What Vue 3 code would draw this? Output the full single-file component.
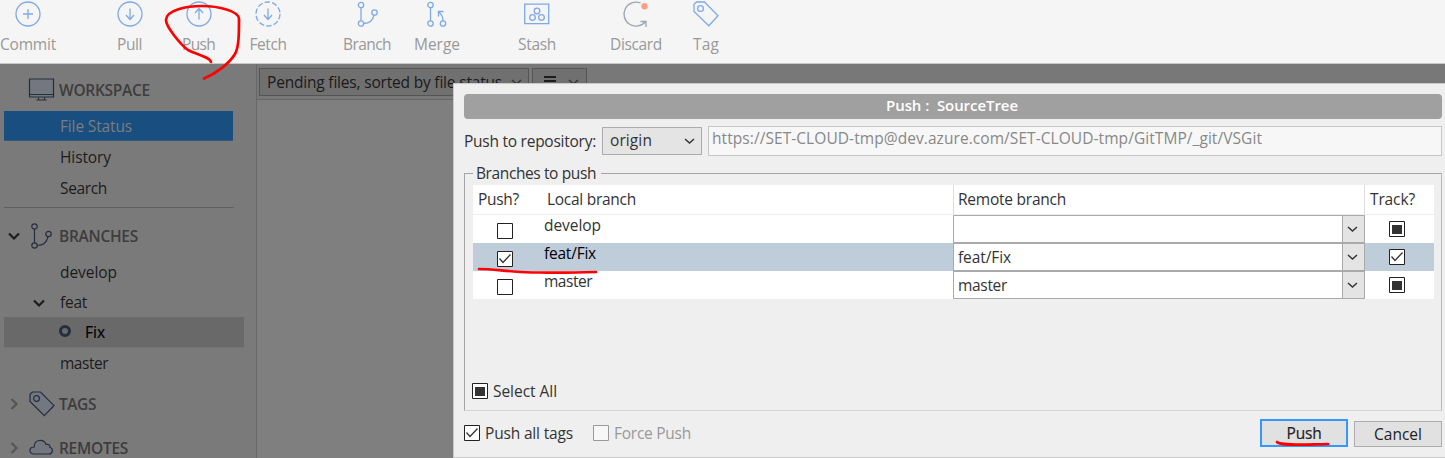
<script setup>
const tools = [
  { name: 'Commit', icon: 'commit', width: 56 },
  { name: 'Pull', icon: 'pull', width: 25 },
  { name: 'Push', icon: 'push', width: 33 },
  { name: 'Fetch', icon: 'fetch', width: 37 },
  { name: 'Branch', icon: 'branch', width: 48 },
  { name: 'Merge', icon: 'merge', width: 46 },
  { name: 'Stash', icon: 'stash', width: 38 },
  { name: 'Discard', icon: 'discard', width: 52 },
  { name: 'Tag', icon: 'tag', width: 26 },
]

const branches = [
  { name: 'develop', push: false, remote: '', track: 'mixed', width: 57 },
  { name: 'feat/Fix', push: true, remote: 'feat/Fix', track: 'on', width: 52, selected: true },
  { name: 'master', push: false, remote: 'master', track: 'mixed', width: 48 },
]

// Tracks a label so that it fills the given width in pixels.
const vFit = (el, { value }) => {
  el.style.letterSpacing = '0px'
  const natural = el.getBoundingClientRect().width
  el.style.letterSpacing = `${(value - natural) / el.textContent.length}px`
}
</script>

<template>
  <div class="app">
    <header class="toolbar">
      <div v-for="t in tools" :key="t.name" class="tool">
        <svg class="tool-icon" width="26" height="26" viewBox="0 0 26 26">
          <template v-if="t.icon === 'commit'">
            <circle cx="13" cy="13" r="12" /><path d="M8 13h10M13 8v10" />
          </template>
          <template v-else-if="t.icon === 'pull'">
            <circle cx="13" cy="13" r="12" /><path d="M13 7.500v11M9 14l4 4.500 4-4.500" />
          </template>
          <template v-else-if="t.icon === 'push'">
            <circle cx="13" cy="13" r="12" /><path d="M13 18.500v-11M9 12l4-4.500 4 4.500" />
          </template>
          <template v-else-if="t.icon === 'fetch'">
            <circle cx="13" cy="13" r="12" stroke-dasharray="5.400 2.140" /><path d="M13 7.500v11M9 14l4 4.500 4-4.500" />
          </template>
          <template v-else-if="t.icon === 'branch'">
            <circle cx="7" cy="4" r="2.700" /><circle cx="7" cy="22.500" r="2.700" /><circle cx="20.500" cy="11.500" r="2.700" />
            <path d="M7 6.700v13M9.700 22.500c6 0 9.300-3.500 10.300-8.300" />
          </template>
          <template v-else-if="t.icon === 'merge'">
            <circle cx="6.500" cy="4" r="2.700" /><circle cx="6.500" cy="22.500" r="2.700" /><circle cx="19" cy="22.500" r="2.700" />
            <path d="M6.500 6.700v13M19 19.800C19 15.500 17.500 13 14.500 11M14.500 15.500V10.500h5" />
          </template>
          <template v-else-if="t.icon === 'stash'">
            <path d="M.7 3.200h24v19.500H.7z" />
            <circle cx="13" cy="10" r="2.800" /><circle cx="8.500" cy="16.500" r="2.800" /><circle cx="17.500" cy="16.500" r="2.800" />
          </template>
          <template v-else-if="t.icon === 'discard'">
            <path class="slate" d="M17.500 2A12 12 0 1 0 22.500 20.500M17.500 20.500h5.500v5.500" />
            <circle class="dot" cx="21.500" cy="5.200" r="3.200" />
          </template>
          <template v-else>
            <path d="M1 3.200 3.500 1h8L25 14.700 15.800 24.700 1 10.500z" /><circle cx="7.500" cy="7.500" r="2.900" />
          </template>
        </svg>
        <span v-fit="t.width" class="text">{{ t.name }}</span>
      </div>
    </header>

    <div class="workarea">
      <aside class="sidebar">
        <div class="group workspace">
          <span class="arrow"></span>
          <svg class="group-icon" width="26" height="26" viewBox="0 0 26 26">
            <path class="shade" d="M.5 2h24v18H.500z" /><path d="M.500 17.500h24M9.500 20.500v2M15.500 20.500v2M7.500 23h10" />
          </svg>
          <span v-fit="91" class="text">WORKSPACE</span>
        </div>
        <div class="item current"><span v-fit="72" class="text">File Status</span></div>
        <div class="item"><span v-fit="51" class="text">History</span></div>
        <div class="item"><span v-fit="47" class="text">Search</span></div>
        <div class="divider"></div>
        <div class="group branches">
          <svg class="arrow open" width="12" height="8" viewBox="0 0 12 8"><path d="m1 1.500 5 5 5-5" /></svg>
          <svg class="group-icon" width="26" height="26" viewBox="0 0 26 26">
            <circle cx="5.500" cy="3.500" r="2.700" /><circle cx="5.500" cy="22.500" r="2.700" /><circle cx="19.500" cy="11" r="2.700" />
            <path d="M5.500 6.200v13.600M8.200 22.500c6 0 9.800-3.500 10.800-8.800" />
          </svg>
          <span v-fit="79" class="text">BRANCHES</span>
        </div>
        <div class="item"><span v-fit="57" class="text">develop</span></div>
        <div class="item folder">
          <svg class="arrow open" width="12" height="8" viewBox="0 0 12 8"><path d="m1 1.500 5 5 5-5" /></svg>
          <span v-fit="27" class="text">feat</span>
        </div>
        <div class="item checked"><i class="ring"></i><span v-fit="20" class="text">Fix</span></div>
        <div class="item"><span v-fit="48" class="text">master</span></div>
        <div class="group tags">
          <svg class="arrow" width="8" height="12" viewBox="0 0 8 12"><path d="m1.500 1 5 5-5 5" /></svg>
          <svg class="group-icon" width="26" height="26" viewBox="0 0 26 26">
            <path class="shade" d="M1 3.200 3.500 1h8L25 14.700 15.300 24.700 1 10.500z" /><circle cx="7.500" cy="7.500" r="2.900" />
          </svg>
          <span v-fit="37" class="text">TAGS</span>
        </div>
        <div class="group">
          <svg class="arrow" width="8" height="12" viewBox="0 0 8 12"><path d="m1.500 1 5 5-5 5" /></svg>
          <svg class="group-icon" width="26" height="26" viewBox="0 0 26 26">
            <path class="shade" d="M5 19c-5.500 0-5.500-7 .2-7C5 4 15 3.500 17 9.500c3-.8 4.500 1 4 3 3.500.3 3 6.500-1 6.500z" />
          </svg>
          <span v-fit="69" class="text">REMOTES</span>
        </div>
      </aside>
      <main class="main">
        <div class="filters">
          <div class="dropdown sort">
            <span v-fit="235" class="text">Pending files, sorted by file status</span>
            <svg class="chevron" width="11" height="7" viewBox="0 0 11 7"><path d="m1 1 4.500 4L10 1" /></svg>
          </div>
          <div class="dropdown view">
            <svg width="12" height="12" viewBox="0 0 12 12"><path class="bars" d="M0 1h12M0 5h12M0 9h12" /></svg>
            <svg class="chevron" width="11" height="7" viewBox="0 0 11 7"><path d="m1 1 4.500 4L10 1" /></svg>
          </div>
        </div>
      </main>
    </div>

    <section class="dialog">
      <h1 class="title"><span v-fit="132" class="text">Push :&nbsp; SourceTree</span></h1>
      <div class="repository">
        <span v-fit="132" class="text">Push to repository:</span>
        <div class="origin">
          <span v-fit="42" class="text">origin</span>
          <svg class="chevron" width="11" height="7" viewBox="0 0 11 7"><path d="m1 1 4.500 4L10 1" /></svg>
        </div>
        <div class="url"><span v-fit="550" class="text">https://SET-CLOUD-tmp@dev.azure.com/SET-CLOUD-tmp/GitTMP/_git/VSGit</span></div>
      </div>

      <div class="frame">
        <div class="legend"><span v-fit="120" class="text">Branches to push</span></div>
        <div class="table">
          <div class="row head">
            <div class="c-push"><span v-fit="41" class="text">Push?</span></div>
            <div class="c-local"><span v-fit="89" class="text">Local branch</span></div>
            <div class="c-remote"><span v-fit="108" class="text">Remote branch</span></div>
            <div class="c-track"><span v-fit="45" class="text">Track?</span></div>
          </div>
          <div v-for="b in branches" :key="b.name" class="row" :class="{ selected: b.selected }">
            <div class="c-push">
              <svg class="box" width="16" height="16" viewBox="0 0 16 16">
                <path class="edge" d="M.5.5h15v15H.5z" /><path v-if="b.push" class="tick" d="m2.500 7.500 3.500 4 7.500-8" />
              </svg>
            </div>
            <div class="c-local"><span v-fit="b.width" class="text">{{ b.name }}</span></div>
            <div class="c-remote">
              <div class="combo"><span v-if="b.remote" v-fit="b.width + 1" class="text">{{ b.remote }}</span></div>
              <div class="combo-arrow">
                <svg class="chevron" width="11" height="7" viewBox="0 0 11 7"><path d="m1 1 4.500 4L10 1" /></svg>
              </div>
            </div>
            <div class="c-track">
              <svg class="box" width="16" height="16" viewBox="0 0 16 16">
                <path class="edge" d="M.5.5h15v15H.5z" />
                <path v-if="b.track === 'on'" class="tick" d="m2.500 7.500 3.500 4 7.500-8" />
                <path v-else class="fill" d="M3 4h10v9H3z" />
              </svg>
            </div>
          </div>
        </div>
        <label class="check select-all">
          <svg class="box" width="16" height="16" viewBox="0 0 16 16"><path class="edge" d="M.5.5h15v15H.5z" /><path class="fill" d="M3 4h10v9H3z" /></svg>
          <span v-fit="64" class="text">Select All</span>
        </label>
      </div>

      <footer class="footer">
        <label class="check">
          <svg class="box" width="16" height="16" viewBox="0 0 16 16"><path class="edge" d="M.5.5h15v15H.5z" /><path class="tick" d="m2.500 7.500 3.500 4 7.500-8" /></svg>
          <span v-fit="88" class="text">Push all tags</span>
        </label>
        <label class="check force">
          <svg class="box" width="16" height="16" viewBox="0 0 16 16"><path class="edge" d="M.5.5h15v15H.5z" /></svg>
          <span v-fit="77" class="text">Force Push</span>
        </label>
        <button class="btn primary"><span v-fit="35" class="text">Push</span></button>
        <button class="btn"><span v-fit="48" class="text">Cancel</span></button>
      </footer>
    </section>

    <svg class="marks" width="1445" height="458" viewBox="0 0 1445 458">
      <path d="M211 62C210 57 195 54 188 50C181 45 166 27 166 20C166 10 187 6 202 6C218 6 239 11 239 19C239 33 239 47 235 54C229 64 215 74 204 78.500" />
      <path d="M479 269C495 269 512 272.500 540 272.500C560 273 580 272.500 596 272" />
      <path d="M1277 442C1281 446 1302 444.500 1328 444" />
    </svg>
  </div>
</template>

<style>
body { overflow: hidden; }
</style>

<style scoped>
.app {
  position: relative;
  box-sizing: border-box;
  width: 1445px;
  height: 458px;
  overflow: hidden;
  background: #7f7f7f;
  color: #333;
  font: 15.5px/20px "Open Sans", "Noto Sans", sans-serif;
}
.app *, .app *::before { box-sizing: border-box; }
.text { display: inline-block; white-space: pre; flex: none; }
svg { display: block; flex: none; overflow: visible; fill: none; }

.toolbar {
  display: flex;
  height: 64px;
  padding-top: 1px;
  background: #f5f5f5;
  border-bottom: 1px solid #c8c8c8;
  color: #999;
}
.tool { display: flex; flex-direction: column; align-items: center; gap: 7px; }
.tool:nth-child(1) { width: 56px; }
.tool:nth-child(2) { width: 26px; margin-left: 60.500px; }
.tool:nth-child(3) { width: 32px; margin-left: 40px; }
.tool:nth-child(4) { width: 37px; margin-left: 35px; }
.tool:nth-child(5) { width: 48px; margin-left: 56.500px; }
.tool:nth-child(6) { width: 46px; margin-left: 23px; }
.tool:nth-child(7) { width: 38px; margin-left: 58px; }
.tool:nth-child(8) { width: 52px; margin-left: 54px; }
.tool:nth-child(9) { width: 26px; margin-left: 31px; }
.tool-icon { stroke: #7faae6; stroke-width: 1.3; }
.tool-icon .slate { stroke: #9ba5b5; }
.tool-icon .dot { fill: #ff9f89; stroke: none; }

.workarea { display: flex; height: 394px; }
.sidebar {
  width: 257px;
  padding: 5px 0 0 4px;
  background: #7a7a7a;
  border-right: 1px solid #686868;
  color: #1c1c1c;
}
.group { display: flex; align-items: center; height: 44px; color: #3d3d3d; font-weight: 600; font-size: 15.5px; }
.group.workspace { height: 42px; }
.group.branches { height: 42px; margin-top: 7px; }
.group.tags { margin-top: 3px; }
.group .arrow { width: 12px; margin-left: 4px; }
.group-icon { margin: 0 4px 0 9px; stroke: #252e3f; stroke-width: 1.2; }
.group-icon .shade { fill: #737880; }
.arrow { stroke: #565656; stroke-width: 2.2; }
.arrow.open { stroke: #1c1c1c; }
.item { display: flex; align-items: center; height: 31px; padding-left: 56px; }
.item .text { margin-top: -2px; }
.item.current .text { margin-top: 0; }
.item.current { width: 229px; height: 30px; margin-bottom: 1px; background: #194e80; border-bottom: 1px solid #345a7d; color: #7d7d7d; }
.divider { width: 230px; height: 1px; margin-top: 3px; background: #606060; }
.item.folder { height: 29px; padding-left: 29px; gap: 15px; }
.item.checked { width: 240px; padding-left: 55px; gap: 14px; background: #696969; border-bottom: 1px solid #747474; color: #000; -webkit-text-stroke: .2px #000; }
.item.checked .text { margin-top: 0; }
.ring { width: 12px; height: 12px; margin-top: -2px; border: 3px solid #252e3f; border-radius: 50%; }

.main { flex: 1; }
.filters { display: flex; gap: 3px; height: 36px; padding: 4px 0 0 2px; background: #787878; border-bottom: 1px solid #666; color: #1a1a1a; }
.dropdown { display: flex; align-items: center; height: 28px; background: #707070; border: 1px solid #555; }
.dropdown .text { margin-top: -1px; }
.sort { width: 270px; padding: 0 6px 0 7px; justify-content: space-between; }
.view { width: 55px; padding: 0 7px 0 11px; justify-content: space-between; }
.bars { stroke: #000; stroke-width: 1.6; }
.chevron { stroke: #333; stroke-width: 1.5; }

.dialog {
  position: absolute;
  left: 453px;
  top: 83px;
  width: 1000px;
  height: 375px;
  padding: 10px 10px 0;
  background: #efefef;
  border: 1px solid #c9c9c9;
}
.title {
  display: flex;
  align-items: center;
  justify-content: center;
  width: 978px;
  height: 25px;
  margin: 0;
  padding-right: 2px;
  border-radius: 4px;
  background: #a0a0a0;
  color: #fff;
  font-size: 15px;
  font-weight: 600;
}
.title .text { margin-top: -3px; }
.repository { display: flex; width: 978px; margin-top: 7px; align-items: center; height: 30px; }
.origin { display: flex; align-items: center; justify-content: space-between; width: 100px; height: 28px; margin: 0 6px; padding: 0 6px 0 7px; background: #e4e4e4; border: 1px solid #acacac; }
.origin .text { margin-top: -2px; }
.url { display: flex; align-items: center; flex: 1; height: 30px; padding: 0 3px 6px; background: #f7f7f7; border: 1px solid #c6c6c6; color: #888; }

.frame { width: 978px; height: 238px; margin-top: 17px; padding: 0 7px 0 8px; border: 1px solid #a5a5a5; border-bottom-color: #d5d5d5; border-right-color: #bbb; }
.legend { display: flex; align-items: center; width: 128px; height: 20px; margin-top: -11px; padding-left: 3px; background: #efefef; }
.table { width: 961px; background: #fff; margin-top: 2px; }
.row { display: grid; grid-template-columns: 66px 414px 412px 69px; height: 28px; }
.row.selected { background: #bfccda; }
.row.selected .c-local { color: #000; }
.row.head { height: 30px; align-items: center; border-bottom: 1px solid #eee; }
.head .text { display: block; width: max-content; margin-top: -1px; }
.head .c-push { padding-left: 5px; }
.head .c-local { padding-left: 8px; }
.head .c-remote { display: flex; align-items: center; height: 29px; padding-left: 4px; border-left: 1px solid #ddd; border-right: 1px solid #ddd; }
.head .c-track { padding-left: 5px; }
.row:not(.head) .c-push { padding: 8px 0 0 24px; }
.row:not(.head) .c-local { padding-left: 5px; }
.row:not(.head) .c-local .text { margin-top: -1px; }
.row:not(.head) .c-remote { display: flex; border: 1px solid #aaa; background: #fff; }
.row:not(.head) .c-track { padding: 6px 0 0 24px; }
.combo { flex: 1; padding: 3px 0 0 4px; }
.combo-arrow { display: flex; align-items: center; justify-content: center; width: 22px; padding-right: 2px; background: #e4e4e4; border-left: 1px solid #aaa; }
.edge { fill: #fff; stroke: #222; stroke-width: 1; }
.tick { stroke: #333; stroke-width: 1.3; }
.fill { fill: #333; }
.check { display: flex; align-items: center; gap: 5px; }
.select-all { margin: 82px 0 0 -1px; }

.footer { display: flex; align-items: flex-start; width: 978px; margin-top: 8px; }
.footer .check { height: 28px; }
.force { margin-left: 20px; color: #999; }
.force .edge { fill: #f7f7f7; stroke: #999; }
.btn { display: flex; align-items: center; justify-content: center; width: 88px; height: 26px; margin: 2px 0 0 6px; padding: 0; background: #e1e1e1; border: 1px solid #adadad; border-radius: 0; color: #222; font: inherit; }
.btn.primary { height: 28px; margin: 0 0 0 auto; border: 2px solid #3399ff; }
.btn.primary .text { margin-top: -1px; -webkit-text-stroke: .2px #222; }

.marks { position: absolute; left: 0; top: 0; stroke: #f00; stroke-width: 2.7; stroke-linecap: round; stroke-linejoin: round; pointer-events: none; }
</style>
